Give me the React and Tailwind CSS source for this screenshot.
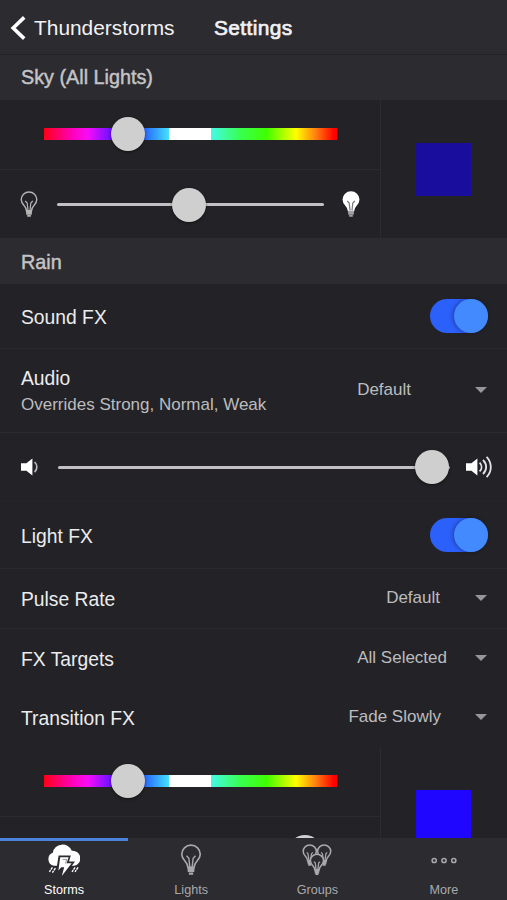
import React, { useState } from "react";

const BULB = "M6.4 19.6C6.4 14.6 1.2 14 1.2 8.6a7.8 7.6 0 0 1 15.6 0c0 5.4-5.2 6-5.2 11z";

function BulbIcon({ filled, className }) {
  return (
    <svg viewBox="0 0 18 27" className={className} fill="none" stroke="currentColor">
      <path d={BULB} strokeWidth="1.4" fill={filled ? "currentColor" : "none"} />
      <path
        d="M5.2 10l2 2 .8 7.4M12.8 10l-2 2-.8 7.4"
        strokeWidth="1.2"
        stroke={filled ? "#77777a" : "currentColor"}
      />
      <path
        d="M6 20.7h6M6.2 22.7h5.6M7.2 24.9h3.6"
        strokeWidth="1.9"
        stroke={filled ? "#a0a0a2" : "currentColor"}
      />
    </svg>
  );
}

function StormIcon() {
  return (
    <svg viewBox="0 0 32 32" className="h-8 w-8">
      <path
        d="M5.8 21.8A6.8 6.8 0 0 1 4.8 8.8a9.8 9.2 0 0 1 19-2A7.6 7.6 0 0 1 26.2 21.8z"
        fill="currentColor"
      />
      <path d="M8.6 24l2-12.6h12.2l-1.8 6h6L22.6 23.4l-7.4 8.4H9z" fill="#2c2b30" />
      <path d="M10.4 26.4l1.8-13.2h8.4l-2 6h5L13.8 32l2.4-8.8h-3z" fill="currentColor" />
      <path d="M14.6 15.4h4l-1 4.2" stroke="#2c2b30" strokeWidth="0.5" fill="none" />
      <path
        d="M4.4 23.4l-3 4.4M7.4 24.2l-3 4.4M27 23.4l-3 4.4M30 23.4l-3 4.4"
        stroke="currentColor"
        strokeWidth="1.4"
        strokeDasharray="2.6 0.7"
      />
    </svg>
  );
}

function GroupsIcon() {
  return (
    <svg viewBox="0 0 30 32" className="h-8 w-[30px]" fill="none" stroke="currentColor">
      {[
        [0.2, 0.2],
        [14.6, 0.2],
        [7.4, 9.4],
      ].map(([x, y]) => (
        <g key={`${x}-${y}`} transform={`translate(${x} ${y}) scale(.84)`}>
          <path d={BULB} strokeWidth="1.8" fill="#2c2b30" />
          <path d="M5.4 9.8l1.6 1.8 1 8M12.6 9.8l-1.6 1.8-1 8" strokeWidth="1.5" />
          <path d="M6 20.7h6M6.4 22.7h5.2M7.2 24.7h3.6" strokeWidth="2.2" />
        </g>
      ))}
    </svg>
  );
}

function MoreIcon() {
  return (
    <svg viewBox="0 0 26 8" className="h-2 w-[26px]" fill="none" stroke="currentColor" strokeWidth="1.5">
      <circle cx="3.2" cy="4.5" r="2.1" />
      <circle cx="13" cy="4.5" r="2.1" />
      <circle cx="22.8" cy="4.5" r="2.1" />
    </svg>
  );
}

function SpeakerIcon({ waves }) {
  return (
    <svg viewBox="0 0 28 24" className="h-6 w-7 shrink-0" fill="none">
      <path d="M1 8.2h5.4L12.4 3.6v17l-6-4.8H1z" fill="white" />
      {waves === 1 && <path d="M14.6 7c3 2.8 3 7.4 0 10.2" stroke="#bbbbbd" strokeWidth="1.7" />}
      {waves === 3 && (
        <g stroke="#e4e4e6" strokeWidth="1.8">
          <path d="M14.6 7.6c2.6 2.6 2.6 6.2 0 8.8" />
          <path d="M18 5c4.2 4.2 4.2 9.8 0 14" />
          <path d="M21.6 1.8c5.6 6 5.6 14.4 0 20.4" />
        </g>
      )}
    </svg>
  );
}

// Round handle, centered on the given position of its track
function Thumb({ value }) {
  return (
    <div
      className="absolute top-1/2 h-[34px] w-[34px] -translate-x-1/2 -translate-y-1/2 rounded-full bg-[#cfcfcf] shadow-[0_1px_3px_rgba(0,0,0,0.5)]"
      style={{ left: `${value}%` }}
    />
  );
}

function LineSlider({ value }) {
  return (
    <div className="relative h-[3px] flex-1 rounded-sm bg-[#c3c1c5]">
      <Thumb value={value} />
    </div>
  );
}

function SectionHeader({ title, className }) {
  return (
    <div className={`flex shrink-0 items-center bg-[#2c2b30] pr-5 pl-[21px] text-[19.8px] text-[#c4c4c6] [-webkit-text-stroke:0.45px] ${className}`}>
      {title}
    </div>
  );
}

function ColorPanel({ brightness, swatch }) {
  return (
    <div className="flex h-[138px] shrink-0">
      <div className="flex w-[381px] flex-col border-r border-[#2b2b30]">
        <div className="flex h-[70px] items-center border-b border-[#2b2b30] pr-[43px] pb-[2px] pl-[44px]">
          <div className="relative h-3 flex-1 bg-[linear-gradient(90deg,#ff0018_0%,#ff00b0_9%,#f80cf8_15%,#8a10ff_21%,#2a10ff_27%,#2a70ff_35%,#44e4ff_42.8%,#fff_42.8%,#fff_57%,#44fae8_57%,#38ff50_67%,#40ff00_76%,#ffff00_86%,#ff7a10_93%,#ff0000_99%)]">
            <Thumb value={28.7} />
          </div>
        </div>
        <div className="flex flex-1 items-center px-5 pt-px">
          <BulbIcon className="mr-[19px] h-[27px] w-[18px] text-[#b4b4b6]" />
          <LineSlider value={brightness} />
          <BulbIcon filled className="ml-[18px] h-[27px] w-[18px] text-white" />
        </div>
      </div>
      <div className="flex flex-1 items-center justify-center pr-px">
        <div className={`h-[53px] w-[55px] ${swatch}`} />
      </div>
    </div>
  );
}

function ToggleRow({ label, className }) {
  const [on, setOn] = useState(true);
  return (
    <div className={`flex shrink-0 items-center justify-between border-b border-[#29292d] pr-[19px] pl-[21px] ${className}`}>
      <span className="pt-[5px] text-[19.3px] text-[#ececee]">{label}</span>
      <button
        onClick={() => setOn(!on)}
        className={`flex h-[34px] w-[58px] rounded-full bg-[#2c60fb] ${on ? "justify-end" : "justify-start"}`}
      >
        <span className="h-[34px] w-[34px] rounded-full bg-[#438aff] shadow-[-1px_0_4px_rgba(0,0,0,0.35)]" />
      </button>
    </div>
  );
}

function SelectRow({ label, note, value, className, valueClass }) {
  return (
    <div className={`flex shrink-0 items-center pr-5 pl-[21px] ${className}`}>
      <div className="flex-1 pt-[2px]">
        <div className="text-[19.3px] leading-[26px] text-[#ececee]">{label}</div>
        {note && <div className="text-[17px] leading-[25px] text-[#bcbcbe]">{note}</div>}
      </div>
      <div className="flex items-center pb-[2px]">
        <span className={`text-[17px] leading-6 text-[#bcbcbe] ${valueClass}`}>{value}</span>
        <svg viewBox="0 0 12 6" className="h-1.5 w-3" fill="#97979a">
          <path d="M0 0h12L6 6z" />
        </svg>
      </div>
    </div>
  );
}

const tabs = [
  { name: "Storms", icon: <StormIcon /> },
  { name: "Lights", icon: <BulbIcon className="h-8 w-[22px]" /> },
  { name: "Groups", icon: <GroupsIcon /> },
  { name: "More", icon: <MoreIcon /> },
];

function App() {
  const [activeTab, setActiveTab] = useState("Storms");

  return (
    <div className="flex h-[900px] w-[507px] flex-col overflow-hidden bg-[#232327] font-['Liberation_Sans',Arial,sans-serif]">
      {/* Header */}
      <header className="flex h-[55px] shrink-0 items-center border-b border-[#232327] bg-[#2c2b30] pt-[2px] pl-[10px] text-[20.9px] text-[#f2f2f4]">
        <svg viewBox="0 0 16 24" className="mr-2 h-6 w-4" fill="none" stroke="white" strokeWidth="3.6">
          <path d="M14.2 1.4L3.2 12l11 10.6" />
        </svg>
        <span className="w-[180px]">Thunderstorms</span>
        <h1 className="text-[20.9px] tracking-[0.4px] [-webkit-text-stroke:0.7px]">Settings</h1>
      </header>

      {/* Settings list */}
      <main className="flex min-h-0 flex-1 flex-col overflow-hidden">
        <SectionHeader title="Sky (All Lights)" className="h-[45px]" />
        <ColorPanel brightness={49.5} swatch="bg-[#180d9c]" />
        <SectionHeader title="Rain" className="h-[46px] pt-[3px]" />
        <ToggleRow label="Sound FX" className="h-[65px]" />
        <SelectRow
          label="Audio"
          note="Overrides Strong, Normal, Weak"
          value="Default"
          className="h-[84px] border-b border-[#2b2b30]"
          valueClass="mr-[64px]"
        />
        <div className="flex h-[69px] shrink-0 items-center border-b border-[#252529] pr-[14px] pl-5">
          <SpeakerIcon waves={1} />
          <div className="ml-[10px] mr-[15px] flex flex-1">
            <LineSlider value={95.5} />
          </div>
          <SpeakerIcon waves={3} />
        </div>
        <ToggleRow label="Light FX" className="h-[67px]" />
        <SelectRow label="Pulse Rate" value="Default" className="h-[60px] border-b border-[#2b2b30]" valueClass="mr-[35px]" />
        <SelectRow label="FX Targets" value="All Selected" className="h-[59px]" valueClass="mr-[28px]" />
        <SelectRow label="Transition FX" value="Fade Slowly" className="h-[59px]" valueClass="mr-[34px]" />
        <ColorPanel brightness={93} swatch="bg-[#1f06ff]" />
      </main>

      {/* Bottom tabs */}
      <nav className="flex h-[62px] shrink-0 bg-[#2c2b30]">
        {tabs.map((tab) => (
          <button
            key={tab.name}
            onClick={() => setActiveTab(tab.name)}
            className={`flex flex-1 flex-col items-center border-t-3 pt-[3px] text-[12.6px] first:flex-none first:basis-[128px] ${
              activeTab === tab.name ? "border-[#4a84dc] text-white" : "border-transparent text-[#a9a9ab]"
            }`}
          >
            <span className="flex h-8 items-center">{tab.icon}</span>
            <span className="mt-[6px] leading-4">{tab.name}</span>
          </button>
        ))}
      </nav>
    </div>
  );
}

export default App;
